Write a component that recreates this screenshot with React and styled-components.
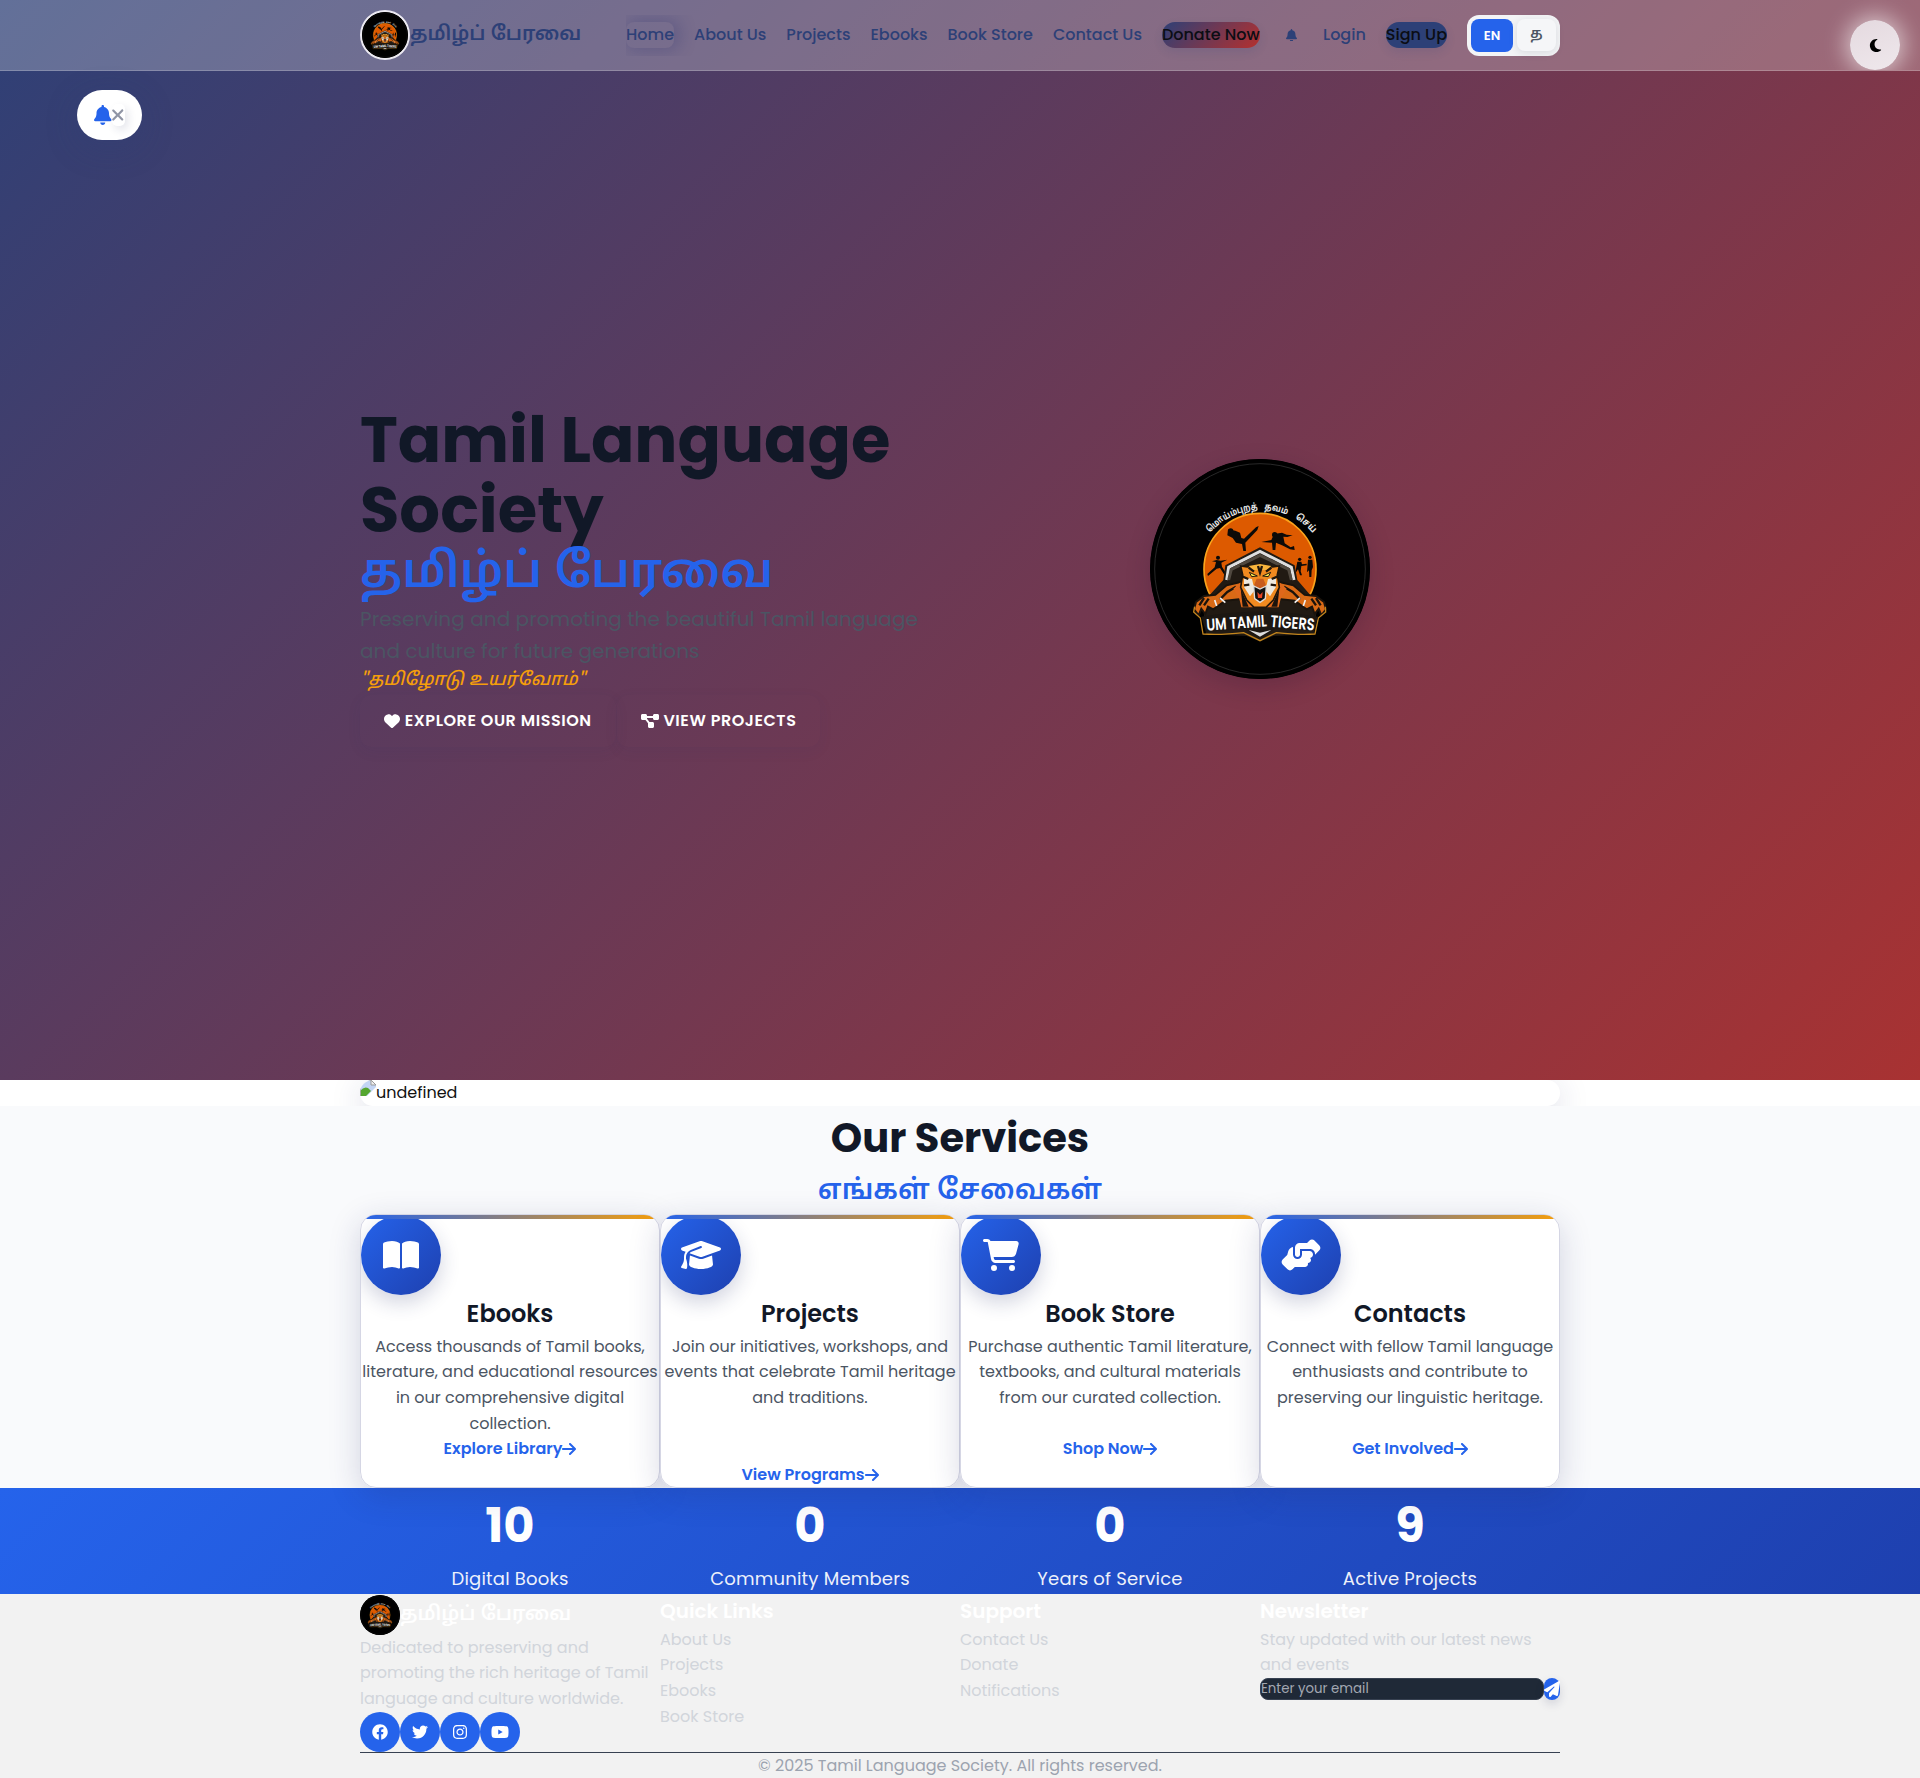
import React from "react";
import styled, { createGlobalStyle, css } from "styled-components";
import { FaFacebook, FaTwitter, FaInstagram, FaYoutube } from "react-icons/fa";
import { FaArrowRight, FaBell, FaBookOpen, FaCartShopping, FaDiagramProject, FaGraduationCap, FaHandshakeAngle, FaHeart, FaMoon, FaPaperPlane, FaXmark } from "react-icons/fa6";

const latin = `Poppins, Inter, "Noto Sans", sans-serif`;
const tamil = `"Noto Sans Tamil", Poppins, "Noto Sans", sans-serif`;

const Global = createGlobalStyle`
  * { box-sizing: border-box; margin: 0; padding: 0; }
  body { margin: 0; background: #f2f2f2; font-family: ${latin}; font-size: 16px; line-height: 1.6; color: #111; }
  button { font: inherit; border: 0; }
  a { color: inherit; text-decoration: none; }
  ul { list-style: none; }
`;

const Glyph = styled.span`
  display: flex;
  flex: none;
  svg {
    display: block;
    width: ${(p) => p.$w}px;
    height: ${(p) => p.$h || 16}px;
  }
`;

const Container = styled.div`
  width: 1200px;
  margin: 0 auto;
`;

const Hero = styled.section`
  height: 1080px;
  display: flex;
  flex-direction: column;
  background: linear-gradient(135deg, #2e4077 0%, #a83232 100%);
`;

const Header = styled.header`
  position: relative;
  height: 71px;
  flex: none;
  overflow: hidden;
  background: rgba(255, 255, 255, 0.25);
  border-bottom: 1px solid rgba(255, 255, 255, 0.2);
`;

const HeaderRow = styled(Container)`
  height: 70px;
  display: flex;
  align-items: center;
  justify-content: space-between;
`;

const Brand = styled.div`
  display: flex;
  align-items: center;
  font-family: ${tamil};
  color: #2d4077;
  font-weight: 600;
  font-size: 19.9px;
  line-height: 32px;
`;

const Seal = styled.span`
  display: block;
  flex: none;
  width: ${(p) => p.$size}px;
  height: ${(p) => p.$size}px;
  border-radius: 50%;
  overflow: hidden;
  background: #000;
  border: ${(p) => p.$ring || "0"};
  box-shadow: ${(p) => p.$shadow || "none"};
  svg { display: block; width: 100%; height: 100%; }
`;

const Nav = styled.nav`
  display: flex;
  align-items: center;
  gap: 20px;
  font-weight: 500;
  line-height: 26px;
  color: #2d4077;
`;

const NavLink = styled.a`
  display: block;
  height: 26px;
  ${(p) => p.$active && css`
    border-radius: 8px;
    box-shadow: 3px 0 16px 3px rgba(45, 50, 110, 0.28);
    clip-path: inset(-7px -30px -8px 0);
  `}
  ${(p) => p.$fill && css`
    color: #0b0d14;
    border-radius: 13px;
    background: ${p.$fill};
    box-shadow: 0 4px 10px rgba(45, 64, 119, 0.14);
  `}
`;

const BellLink = styled.a`
  width: 23.4px;
  display: flex;
  justify-content: center;
`;

const Lang = styled.div`
  width: 93px;
  height: 41px;
  padding: 4px;
  display: flex;
  justify-content: space-between;
  border-radius: 12px;
  background: #f3f4f6;
  margin-top: 1px;
`;

const LangButton = styled.button`
  width: ${(p) => (p.$on ? 42 : 39)}px;
  height: ${(p) => (p.$on ? 33 : 32)}px;
  border-radius: 8px;
  font-size: ${(p) => (p.$on ? 13 : 14)}px;
  font-weight: 600;
  color: ${(p) => (p.$on ? "#fff" : "#4b5563")};
  background: ${(p) => (p.$on ? "#2563eb" : "#f5f6f8")};
  box-shadow: ${(p) => (p.$on ? "none" : "0 2px 8px rgba(31, 41, 55, 0.12)")};
  font-family: ${(p) => (p.$on ? latin : tamil)};
`;

const ThemeToggle = styled.button`
  position: absolute;
  right: 20px;
  top: 20px;
  width: 50px;
  height: 50px;
  border-radius: 50%;
  display: flex;
  align-items: center;
  justify-content: center;
  color: #000;
  background: linear-gradient(160deg, #e4d9df, #efe8ec);
  box-shadow: 0 0 22px 4px rgba(255, 255, 255, 0.6);
`;

const Notice = styled.div`
  position: absolute;
  left: 77px;
  top: 90px;
  width: 65px;
  height: 50px;
  padding-left: 17px;
  display: flex;
  align-items: center;
  border-radius: 25px;
  background: #fff;
  color: #2563eb;
  box-shadow: 0 8px 32px rgba(45, 64, 119, 0.25);
`;

const Dismiss = styled.button`
  width: 13px;
  height: 22px;
  display: flex;
  align-items: center;
  justify-content: center;
  border-radius: 5px;
  color: #9095a5;
  background: #fff;
  box-shadow: 3px 4px 8px rgba(31, 41, 90, 0.12);
`;

const HeroBody = styled(Container)`
  flex: 1;
  display: grid;
  grid-template-columns: 1fr 1fr;
  align-items: center;
`;

const HeroCopy = styled.div`
  padding-top: 0.6px;
`;

const HeroTitle = styled.h1`
  font-size: 64px;
  line-height: 1.1;
  font-weight: 700;
  color: #111827;
`;

const HeroTamil = styled.div`
  font: 600 48px/58px ${tamil};
  height: 57.6px;
  color: #2563eb;
`;

const Lead = styled.p`
  width: 580px;
  font-size: 20px;
  letter-spacing: 0.06px;
  color: #4b5563;
`;

const Motto = styled.p`
  font: italic 500 18px/28.4px ${tamil};
  height: 28.2px;
  color: #f59e0b;
`;

const Actions = styled.div`
  display: flex;
  gap: 1px;
`;

const Action = styled.a`
  padding: 12.8px 24px;
  display: flex;
  align-items: center;
  gap: 4.8px;
  border-radius: 12px;
  color: #fff;
  font-weight: 600;
  letter-spacing: 0.54px;
  white-space: nowrap;
  box-shadow: 0 4px 14px rgba(45, 50, 100, 0.08);
`;

const HeroArt = styled.div`
  display: flex;
  justify-content: center;
  padding-bottom: 14px;
`;

const Carousel = styled.section`
  height: 25.6px;
  overflow: hidden;
  background: #fff;
`;

const Slide = styled(Container)`
  height: 25.6px;
  display: flex;
  overflow: hidden;
  border-radius: 16px;
  background: #fff;
  box-shadow: 0 8px 32px rgba(31, 38, 100, 0.18);
`;

const Services = styled.section`
  background: #f9fafc;
  text-align: center;
`;

const SectionTitle = styled.h2`
  font-size: 40px;
  line-height: 64px;
  font-weight: 700;
  color: #111827;
`;

const SectionTamil = styled.p`
  font: 600 28px/44.8px ${tamil};
  height: 44.8px;
  color: #2563eb;
`;

const Cards = styled(Container)`
  display: grid;
  grid-template-columns: repeat(4, 300px);
`;

const Card = styled.article`
  height: 274px;
  position: relative;
  overflow: hidden;
  border: 1px solid #d5d6e4;
  border-radius: 16px;
  background: #fff;
  &::before {
    content: "";
    position: absolute;
    inset: 0 0 auto;
    height: 4px;
    background: linear-gradient(90deg, #2563eb, #f59e0b);
  }
`;

const CardShell = styled.div`
  border-radius: 16px;
  position: relative;
  box-shadow: 0 8px 32px rgba(31, 38, 100, 0.18);
`;

const CardIcon = styled.div`
  width: 80px;
  height: 80px;
  border-radius: 50%;
  display: flex;
  align-items: center;
  justify-content: center;
  color: #fff;
  background: linear-gradient(135deg, #2563eb, #1e40af);
  box-shadow: 0 8px 20px rgba(31, 38, 100, 0.2);
`;

const CardTitle = styled.h3`
  font-size: 24px;
  line-height: 38.4px;
  font-weight: 600;
  color: #111827;
`;

const CardText = styled.p`
  color: #4b5563;
  height: ${(p) => p.$h}px;
`;

const CardLink = styled.a`
  display: flex;
  align-items: center;
  justify-content: center;
  color: #2563eb;
  font-weight: 600;
`;

const Stats = styled.section`
  background: linear-gradient(135deg, #2563eb, #1e40af);
`;

const StatGrid = styled(Container)`
  display: grid;
  grid-template-columns: repeat(4, 300px);
  text-align: center;
  color: #fff;
`;

const StatValue = styled.div`
  font-size: 48px;
  line-height: 76.8px;
  font-weight: 700;
`;

const StatLabel = styled.div`
  font-size: 18px;
  line-height: 28.8px;
  letter-spacing: 0.2px;
  opacity: 0.92;
`;

const Footer = styled.footer`
  padding-top: 0.8px;
  background: #f2f2f2;
`;

const FooterGrid = styled(Container)`
  height: 156.8px;
  display: grid;
  grid-template-columns: repeat(4, 300px);
  color: #d1d5db;
`;

const FooterTitle = styled.h4`
  font-size: 20px;
  line-height: 32px;
  font-weight: 600;
  color: #fff;
`;

const FooterBrand = styled(Brand)`
  color: #fff;
  height: 40px;
`;

const Socials = styled.div`
  display: flex;
`;

const Social = styled.a`
  width: 40px;
  height: 40px;
  border-radius: 50%;
  display: flex;
  align-items: center;
  justify-content: center;
  background: #2563eb;
  color: #fff;
`;

const Subscribe = styled.form`
  display: flex;
  width: 300px;
  height: 22px;
`;

const Email = styled.input`
  width: 284px;
  height: 22px;
  border: 1px solid #374151;
  border-radius: 8px;
  background: #1f2937;
  font: 400 13.33px ${latin};
  &::placeholder { color: #a3a8b2; }
`;

const Send = styled.button`
  width: 16px;
  height: 22px;
  display: flex;
  align-items: center;
  border-radius: 8px;
  background: #2563eb;
  color: #fff;
  box-shadow: 0 4px 10px rgba(31, 41, 90, 0.15);
`;

const Copyright = styled(Container)`
  border-top: 1px solid #374151;
  text-align: center;
  color: #9ca3af;
`;

function Tiger({ id }) {
  const word = { lengthAdjust: "spacingAndGlyphs" };
  return (
    <svg viewBox="60 57 660 660">
      <defs>
        <path id={id} d="M240 280A203 203 0 0 1 552 284" />
      </defs>
      <circle cx="390" cy="387" r="330" fill="#000" />
      <circle cx="390" cy="387" r="316" fill="none" stroke="#3c3c3c" strokeWidth="2" />
      <circle cx="390" cy="388" r="168" fill="#dd5a00" stroke="#fba41c" strokeWidth="5" />
      <g fill="#e8e8e8" fontSize="28" fontWeight="700" fontFamily={tamil}>
        <text textLength="164" {...word}><textPath href={`#${id}`} textLength="164" {...word}>மொய்ம்புறத்</textPath></text>
        <text textLength="70" {...word}><textPath href={`#${id}`} startOffset="184" textLength="70" {...word}>தவம்</textPath></text>
        <text textLength="70" {...word}><textPath href={`#${id}`} startOffset="280" textLength="70" {...word}>செய்</textPath></text>
      </g>
      <g fill="#0c0a08">
        <circle cx="302" cy="273" r="8" />
        <path d="M294 268l-2 18 16 8 10 14 18 4 4 21h8l-2-25 36-38 4-12-8 4-36 34-8-2-4-16-14-6z" />
        <circle cx="434" cy="284" r="8" />
        <path d="M394 306l30-6 8-18 24-4 14 6 18 2-16 5-12-1 4 20 18 12 10-4 2 12-14-2-24-12-18-8-2 22h-8l-2-22z" />
        <circle cx="264" cy="353" r="6" />
        <path d="M246 364l14-4 12 2 20-3-18 9 2 12 12 20-4 6-14-22-10 2-26 22-2-6 22-20 4-16z" />
        <circle cx="509" cy="358" r="5" />
        <path d="M502 365h12l2 8 14-2v5l-16 2-2 16 4 12h-6l-6-18-8 12 3-20z" />
        <circle cx="540" cy="352" r="5" />
        <path d="M534 359h13l2 22-4 10-1 20h-6l-1-20-6 6z" />
      </g>
      <path d="M280 420l6-44 104-54 104 54 8 44 60 70-10 92-122 6-40 16-40-16-122-6-10-94z" fill="#211a13" />
      <path d="M290 420l6-38 94-48 94 48 8 38" fill="none" stroke="#dedede" strokeWidth="9" />
      <path d="M296 420l8-32 86-42 86 42 8 32" fill="none" stroke="#50483f" strokeWidth="9" />
      <path d="M332 426l-42 10-34 28-34 4-24 18-6 22 14 18 8-20 12 16 8-22 16 8 36-26 56-6zM448 426l42 10 34 28 34 4 24 18 6 22-14 18-8-20-12 16-8-22-16 8-36-26-56-6z" fill="#d96a16" stroke="#1a130c" strokeWidth="6" />
      <path d="M318 440l-26 16-22 22M462 440l26 16 22 22M236 476l-14 20M222 474l-14 22M544 476l14 20M558 474l14 22" fill="none" stroke="#1a130c" strokeWidth="7" />
      <path d="M270 474l16 14M254 480l6 18M510 474l-16 14M526 480l-6 18" stroke="#eee" strokeWidth="5" />
      <path d="M310 446l18 30 6 26h112l6-26 18-30-20-18H330z" fill="#df681b" />
      <path d="M332 446l24 54h-18zM448 446l-24 54h18z" fill="#1a130c" />
      <path d="M332 378l20 3 38-8 38 8 20-3-6 26 6 38-18 38-22 22h-36l-22-22-18-38 6-38z" fill="#f18a20" stroke="#20160c" strokeWidth="5" />
      <path d="M356 378l34-6 34 6-14 12h-40z" fill="#f9b53c" />
      <path d="M342 412l24 5 8 34-14 18-18-28zM438 412l-24 5-8 34 14 18 18-28z" fill="#eee9df" />
      <path d="M356 383l16 12M424 383l-16 12M338 410l17 7M442 410l-17 7M342 436l16-2M438 436l-16-2M384 378l6 20 6-20" stroke="#20160c" strokeWidth="7" fill="none" />
      <path d="M358 397l24 11-17 2zM422 397l-24 11 17 2z" fill="#fff04e" stroke="#20160c" strokeWidth="3" />
      <path d="M380 416h20l8 20-18 10-18-10z" fill="#c85b1c" />
      <path d="M371 438l19 9 19-9-3 38-16 11-16-11z" fill="#111" stroke="#ddd" strokeWidth="4" />
      <path d="M382 456l8 8 8-8-2 18h-12z" fill="#e64523" />
      <path d="M194 500l-3 16 20 18 8 48q50 4 122-4l49 24 49-24q72 8 116 4l10-48 22-18-1-16" fill="none" stroke="#c3851d" strokeWidth="4" />
      <path d="M214 530q176-30 350 0l-12 44-116-8-46 32-46-32-116 10z" fill="#1c1712" />
      <path d="M356 570l34 8 34-8-34 20z" fill="#ddd" />
      <g fill="#fff" fontFamily={latin} fontWeight="600" fontSize="50">
        <text x="230" y="572" textLength="182" lengthAdjust="spacingAndGlyphs" transform="rotate(-4 230 572)">UM TAMIL</text>
        <text x="420" y="560" textLength="133" lengthAdjust="spacingAndGlyphs" transform="rotate(5 420 560)">TIGERS</text>
      </g>
    </svg>
  );
}

const BrokenImage = () => (
  <svg width="16" height="16" viewBox="0 0 16 16">
    <path d="M0 0h11l5 5v11H0z" fill="#c3d5f4" />
    <path d="M0 16v-5q4-5 8-3l3 3-5 5z" fill="#55a630" />
    <path d="M11 0v5h5z" fill="#eee" stroke="#9b9b9b" />
    <path d="M16 7L7 16h9z" fill="#fff" />
    <path d="M0.5 16V.5H11" fill="none" stroke="#a7a7a7" />
  </svg>
);

const navItems = ["Home", "About Us", "Projects", "Ebooks", "Book Store", "Contact Us"];

const services = [
  { icon: FaBookOpen, iw: 36, title: "Ebooks", link: "Explore Library", h: 102.4,
    text: "Access thousands of Tamil books, literature, and educational resources in our comprehensive digital collection." },
  { icon: FaGraduationCap, iw: 40, title: "Projects", link: "View Programs", h: 128,
    text: "Join our initiatives, workshops, and events that celebrate Tamil heritage and traditions." },
  { icon: FaCartShopping, iw: 36, title: "Book Store", link: "Shop Now", h: 102.4,
    text: "Purchase authentic Tamil literature, textbooks, and cultural materials from our curated collection." },
  { icon: FaHandshakeAngle, iw: 40, title: "Contacts", link: "Get Involved", h: 102.4,
    text: "Connect with fellow Tamil language enthusiasts and contribute to preserving our linguistic heritage." },
];

const stats = [["10", "Digital Books"], ["0", "Community Members"], ["0", "Years of Service"], ["9", "Active Projects"]];

const linkGroups = [
  ["Quick Links", ["About Us", "Projects", "Ebooks", "Book Store"]],
  ["Support", ["Contact Us", "Donate", "Notifications"]],
];

const socials = [[FaFacebook, 16], [FaTwitter, 16], [FaInstagram, 14], [FaYoutube, 18]];

export default function App() {
  return (
    <>
      <Global />
      <Hero>
        <Header>
          <HeaderRow>
            <Brand>
              <Seal $size={50} $ring="2px solid #eceaf2"><Tiger id="arc-head" /></Seal>
              தமிழ்ப் பேரவை
            </Brand>
            <Nav>
              {navItems.map((label, i) => <NavLink key={label} $active={i === 0}>{label}</NavLink>)}
              <NavLink $fill="linear-gradient(135deg, #2d4077, #b5302e)">Donate Now</NavLink>
              <BellLink><Glyph $w={11} $h={12.8}><FaBell /></Glyph></BellLink>
              <NavLink>Login</NavLink>
              <NavLink $fill="#2d4077">Sign Up</NavLink>
              <Lang>
                <LangButton $on>EN</LangButton>
                <LangButton>த</LangButton>
              </Lang>
            </Nav>
          </HeaderRow>
          <ThemeToggle><Glyph $w={13} $h={15}><FaMoon /></Glyph></ThemeToggle>
        </Header>
        <Notice>
          <Glyph $w={17.5} $h={20}><FaBell /></Glyph>
          <Dismiss><Glyph $w={13.5} $h={18}><FaXmark /></Glyph></Dismiss>
        </Notice>
        <HeroBody>
          <HeroCopy>
            <HeroTitle>Tamil Language Society</HeroTitle>
            <HeroTamil>தமிழ்ப் பேரவை</HeroTamil>
            <Lead>Preserving and promoting the beautiful Tamil language and culture for future generations</Lead>
            <Motto>"தமிழோடு உயர்வோம்"</Motto>
            <Actions>
              <Action><Glyph $w={16}><FaHeart /></Glyph>EXPLORE OUR MISSION</Action>
              <Action><Glyph $w={18}><FaDiagramProject /></Glyph>VIEW PROJECTS</Action>
            </Actions>
          </HeroCopy>
          <HeroArt>
            <Seal $size={220} $shadow="0 8px 24px rgba(40, 20, 50, 0.22)"><Tiger id="arc-hero" /></Seal>
          </HeroArt>
        </HeroBody>
      </Hero>
      <Carousel>
        <Slide><BrokenImage />undefined</Slide>
      </Carousel>
      <Services>
        <SectionTitle>Our Services</SectionTitle>
        <SectionTamil>எங்கள் சேவைகள்</SectionTamil>
        <Cards>
          {services.map(({ icon: Icon, ...s }) => (
            <CardShell key={s.title}>
              <Card>
                <CardIcon><Glyph $w={s.iw} $h={32}><Icon /></Glyph></CardIcon>
                <CardTitle>{s.title}</CardTitle>
                <CardText $h={s.h}>{s.text}</CardText>
                <CardLink>{s.link}<Glyph $w={14}><FaArrowRight /></Glyph></CardLink>
              </Card>
            </CardShell>
          ))}
        </Cards>
      </Services>
      <Stats>
        <StatGrid>
          {stats.map(([value, label]) => (
            <div key={label}>
              <StatValue>{value}</StatValue>
              <StatLabel>{label}</StatLabel>
            </div>
          ))}
        </StatGrid>
      </Stats>
      <Footer>
        <FooterGrid>
          <div>
            <FooterBrand>
              <Seal $size={40}><Tiger id="arc-foot" /></Seal>
              தமிழ்ப் பேரவை
            </FooterBrand>
            <p>Dedicated to preserving and promoting the rich heritage of Tamil language and culture worldwide.</p>
            <Socials>
              {socials.map(([Icon, w], i) => <Social key={i}><Glyph $w={w}><Icon /></Glyph></Social>)}
            </Socials>
          </div>
          {linkGroups.map(([title, links]) => (
            <div key={title}>
              <FooterTitle>{title}</FooterTitle>
              <ul>{links.map((l) => <li key={l}><a>{l}</a></li>)}</ul>
            </div>
          ))}
          <div>
            <FooterTitle>Newsletter</FooterTitle>
            <p>Stay updated with our latest news and events</p>
            <Subscribe>
              <Email placeholder="Enter your email" />
              <Send type="button"><Glyph $w={16}><FaPaperPlane /></Glyph></Send>
            </Subscribe>
          </div>
        </FooterGrid>
        <Copyright>© 2025 Tamil Language Society. All rights reserved.</Copyright>
      </Footer>
    </>
  );
}
